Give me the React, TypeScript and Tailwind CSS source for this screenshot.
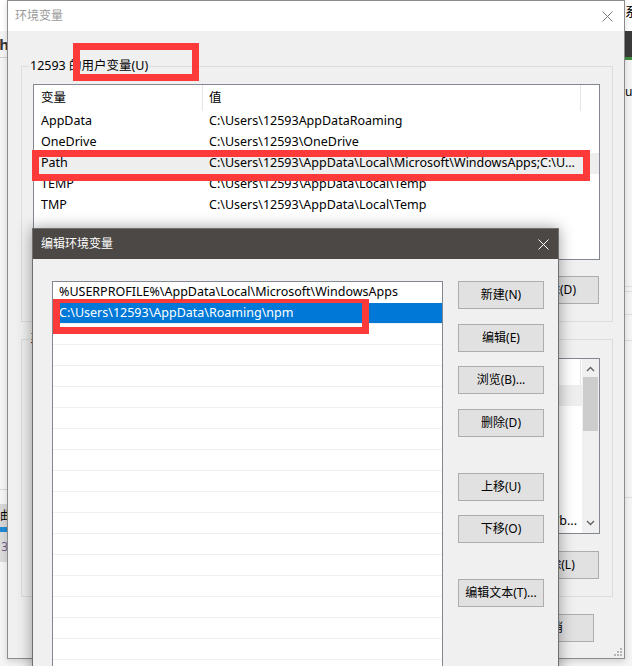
import React from "react";

const font = "font-['Noto_Sans','Noto_Sans_CJK_SC',sans-serif]";

const userVars = [
  { name: "AppData", value: "C:\\Users\\12593AppDataRoaming" },
  { name: "OneDrive", value: "C:\\Users\\12593\\OneDrive" },
  { name: "Path", value: "C:\\Users\\12593\\AppData\\Local\\Microsoft\\WindowsApps;C:\\U...", selected: true },
  { name: "TEMP", value: "C:\\Users\\12593\\AppData\\Local\\Temp" },
  { name: "TMP", value: "C:\\Users\\12593\\AppData\\Local\\Temp" },
];

const sysVars = [
  { name: "ComSpec", value: "C:\\Windows\\system32\\cmd.exe", selected: true },
  { name: "DriverData", value: "C:\\Windows\\System32\\Drivers\\DriverData" },
  { name: "JAVA_HOME", value: "C:\\Program Files\\Java\\jdk1.8.0_201" },
  { name: "NUMBER_OF_PROCESSORS", value: "8" },
  { name: "OS", value: "Windows_NT" },
  { name: "OnlineServices", value: "Online Services" },
  { name: "Path", value: "C:\\Windows\\system32;C:\\Windows;C:\\Windows\\System32\\Wb...", right: true },
];

const pathEntries = [
  "%USERPROFILE%\\AppData\\Local\\Microsoft\\WindowsApps",
  "C:\\Users\\12593\\AppData\\Roaming\\npm",
];

const CloseX = ({ className }: { className: string }) => (
  <svg className={className} width="11" height="11" viewBox="0 0 11 11" fill="none" stroke="currentColor" strokeWidth="1">
    <path d="M0.5 0.5l10 10M10.5 0.5l-10 10" />
  </svg>
);

const Btn = ({ label, className = "" }: { label: string; className?: string }) => (
  <div
    className={`w-[86px] h-[28px] shrink-0 border border-[#adadad] bg-[#e1e1e1] flex items-center justify-center text-[12px] text-black ${className}`}
  >
    {label}
  </div>
);

const ListView = ({
  rows,
  scroll = false,
}: {
  rows: { name: string; value: string; selected?: boolean; right?: boolean }[];
  scroll?: boolean;
}) => (
  <div className="h-[176px] border border-[#828790] bg-white flex overflow-hidden">
    <div className="flex-1 min-w-0">
      {/* Header */}
      <div className="h-[26px] flex text-[12.5px] text-black">
        <div className="w-[169px] shrink-0 border-r border-[#e5e5e5] pl-[7px] flex items-center">变量</div>
        <div className="w-[378px] shrink-0 border-r border-[#e5e5e5] pl-[6px] flex items-center">值</div>
      </div>
      {rows.map((r) => (
        <div key={r.name} className={`h-[21px] flex text-[12.5px] text-black ${r.selected ? "bg-[#eeeeee]" : ""}`}>
          <div className="w-[169px] shrink-0 pl-[7px] flex items-center whitespace-nowrap overflow-hidden">{r.name}</div>
          <div
            className={`w-[378px] shrink-0 flex items-center whitespace-nowrap overflow-hidden ${
              r.right ? "justify-end pr-[4px]" : "pl-[6px]"
            }`}
          >
            <span className="shrink-0">{r.value}</span>
          </div>
        </div>
      ))}
    </div>
    {scroll && (
      <div className="w-[17px] shrink-0 bg-[#f0f0f0] flex flex-col items-center">
        <svg className="mt-[7px] text-[#606060]" width="9" height="6" viewBox="0 0 9 6" fill="none" stroke="currentColor" strokeWidth="1.3">
          <path d="M1 5l3.5-3.5L8 5" />
        </svg>
        <div className="mt-[5px] w-[15px] h-[54px] bg-[#cdcdcd]" />
        <div className="flex-1" />
        <svg className="mb-[7px] text-[#606060]" width="9" height="6" viewBox="0 0 9 6" fill="none" stroke="currentColor" strokeWidth="1.3">
          <path d="M1 1l3.5 3.5L8 1" />
        </svg>
      </div>
    )}
  </div>
);

export default function App() {
  return (
    <div className={`relative w-[632px] h-[666px] overflow-hidden bg-[#f3f3f3] ${font}`}>
      {/* Window behind, left strip */}
      <div className="absolute left-0 top-0 w-[7px] h-full flex flex-col overflow-hidden bg-[#f4f4f4]">
        <div className="h-[31px] shrink-0 bg-white" />
        <div className="h-[27px] shrink-0 border-b border-[#d0d0d0] flex items-center justify-end">
          <span className="shrink-0 text-[15px] font-bold text-[#333] -mr-[2px]">ch</span>
        </div>
        <div className="h-[432px] shrink-0 border-b border-[#d8d8d8]" />
        <div className="h-[14px] shrink-0" />
        <div className="h-[23px] shrink-0 bg-[#d6d6d6] flex items-center justify-end">
          <span className="shrink-0 text-[12px] text-black -mr-[5px]">曲</span>
        </div>
        <div className="h-[5px] shrink-0 bg-[#1f8ad2]" />
        <div className="h-[30px] shrink-0 bg-[#dadada] flex items-center justify-end">
          <span className="shrink-0 text-[12px] text-[#6a5a8a] -mr-[1px]">3</span>
        </div>
      </div>

      {/* Window behind, right strip */}
      <div className="absolute left-[625px] top-0 w-[7px] h-full flex flex-col overflow-hidden bg-[#f4f4f4]">
        <div className="h-[31px] shrink-0 bg-white flex items-start">
          <span className="shrink-0 text-[13px] leading-[16px] mt-[3px] text-black">系</span>
        </div>
        <div className="h-[26px] shrink-0 bg-[#3b3b3b]" />
        <div className="h-[3px] shrink-0 bg-[#3d8b3d]" />
        <div className="h-[26px] shrink-0" />
        <span className="shrink-0 text-[12px] leading-[12px] text-black">ur</span>
        <div className="h-[189px] shrink-0 border-b border-[#dcdcdc]" />
        <div className="h-[5px] shrink-0 border-b border-[#dcdcdc]" />
        <div className="h-[23px] shrink-0 border-b border-[#dcdcdc]" />
        <div className="h-[26px] shrink-0 border-b border-[#dcdcdc]" />
        <div className="h-[157px] shrink-0 border-b border-[#dcdcdc]" />
      </div>

      {/* 环境变量 */}
      <div className="absolute left-[7px] top-0 w-[618px] h-[659px] border border-[#8c8c8c] bg-[#f0f0f0] shadow-[0_2px_6px_rgba(0,0,0,0.15)]">
        <div className="h-[30px] bg-white flex items-center justify-between pl-[7px] pr-[11px]">
          <span className="text-[12px] text-[#9a9a9a]">环境变量</span>
          <CloseX className="text-[#7a7a7a]" />
        </div>
        <div className="pl-[13px] pr-[11px] pt-[35px]">
          {/* User variables */}
          <div className="relative h-[256px] border border-[#dcdcdc] pt-[17px] pl-[11px] pr-[12px]">
            <span className="absolute left-[7px] -top-[10px] bg-[#f0f0f0] px-[1px] leading-[18px] text-[12.5px] text-black">
              12593 的用户变量(U)
            </span>
            <ListView rows={userVars} />
            <div className="flex justify-end gap-[9px] mt-[16px] pr-[1px]">
              <Btn label="新建(N)" />
              <Btn label="编辑(E)" />
              <Btn label="删除(D)" />
            </div>
          </div>

          {/* System variables */}
          <div className="relative mt-[17px] h-[258px] border border-[#dcdcdc] pt-[18px] pl-[11px] pr-[12px]">
            <span className="absolute left-[7px] -top-[10px] bg-[#f0f0f0] px-[1px] leading-[18px] text-[12.5px] text-black">
              系统变量(S)
            </span>
            <ListView rows={sysVars} scroll />
            <div className="flex justify-end gap-[9px] mt-[17px] pr-[1px]">
              <Btn label="新建(W)" />
              <Btn label="编辑(I)" />
              <Btn label="删除(L)" />
            </div>
          </div>

          <div className="flex justify-end gap-[9px] mt-[17px] pr-[19px]">
            <Btn label="确定" className="w-[82px]" />
            <Btn label="取消" className="w-[82px]" />
          </div>
        </div>
        {/* size grip */}
        <svg className="absolute right-[2px] bottom-[2px]" width="8" height="8" viewBox="0 0 8 8" fill="#b5b5b5">
          <rect x="6" y="0" width="2" height="2" />
          <rect x="3" y="3" width="2" height="2" />
          <rect x="6" y="3" width="2" height="2" />
          <rect x="0" y="6" width="2" height="2" />
          <rect x="3" y="6" width="2" height="2" />
          <rect x="6" y="6" width="2" height="2" />
        </svg>
      </div>

      {/* 编辑环境变量 */}
      <div className="absolute left-[32px] top-[228px] w-[527px] h-[470px] border border-[#6f6f6f] bg-[#f0f0f0] shadow-[0_0_14px_rgba(0,0,0,0.38)]">
        <div className="h-[30px] bg-[#4b4845] flex items-center justify-between pl-[8px] pr-[9px]">
          <span className="text-[12px] text-white">编辑环境变量</span>
          <CloseX className="text-white" />
        </div>
        <div className="flex pl-[19px] pt-[22px] gap-[15px]">
          <div className="w-[391px] h-[420px] shrink-0 border border-[#828790] bg-white overflow-hidden">
            {pathEntries.map((p, i) => (
              <div
                key={p}
                className={`h-[21px] pl-[6px] flex items-center whitespace-nowrap text-[12.5px] border-b ${
                  i === 1 ? "bg-[#0078d7] text-white border-[#f0f0f0]" : "text-black border-transparent"
                }`}
              >
                {p}
              </div>
            ))}
            {Array.from({ length: 18 }).map((_, i) => (
              <div key={i} className="h-[21px] border-b border-[#f0f0f0]" />
            ))}
          </div>
          <div className="flex flex-col">
            <Btn label="新建(N)" />
            <Btn label="编辑(E)" className="mt-[15px]" />
            <Btn label="浏览(B)..." className="mt-[14px]" />
            <Btn label="删除(D)" className="mt-[15px]" />
            <Btn label="上移(U)" className="mt-[36px]" />
            <Btn label="下移(O)" className="mt-[14px]" />
            <Btn label="编辑文本(T)..." className="mt-[36px]" />
          </div>
        </div>
      </div>

      {/* Red annotation boxes */}
      <div className="absolute left-[73px] top-[43px] w-[126px] h-[38px] border-[7px] border-[#fd3a3a]" />
      <div className="absolute left-[32px] top-[150px] w-[558px] h-[31px] border-[7px] border-[#fd3a3a]" />
      <div className="absolute left-[53px] top-[299px] w-[316px] h-[35px] border-[7px] border-t-[4px] border-[#fd3a3a]" />
    </div>
  );
}
